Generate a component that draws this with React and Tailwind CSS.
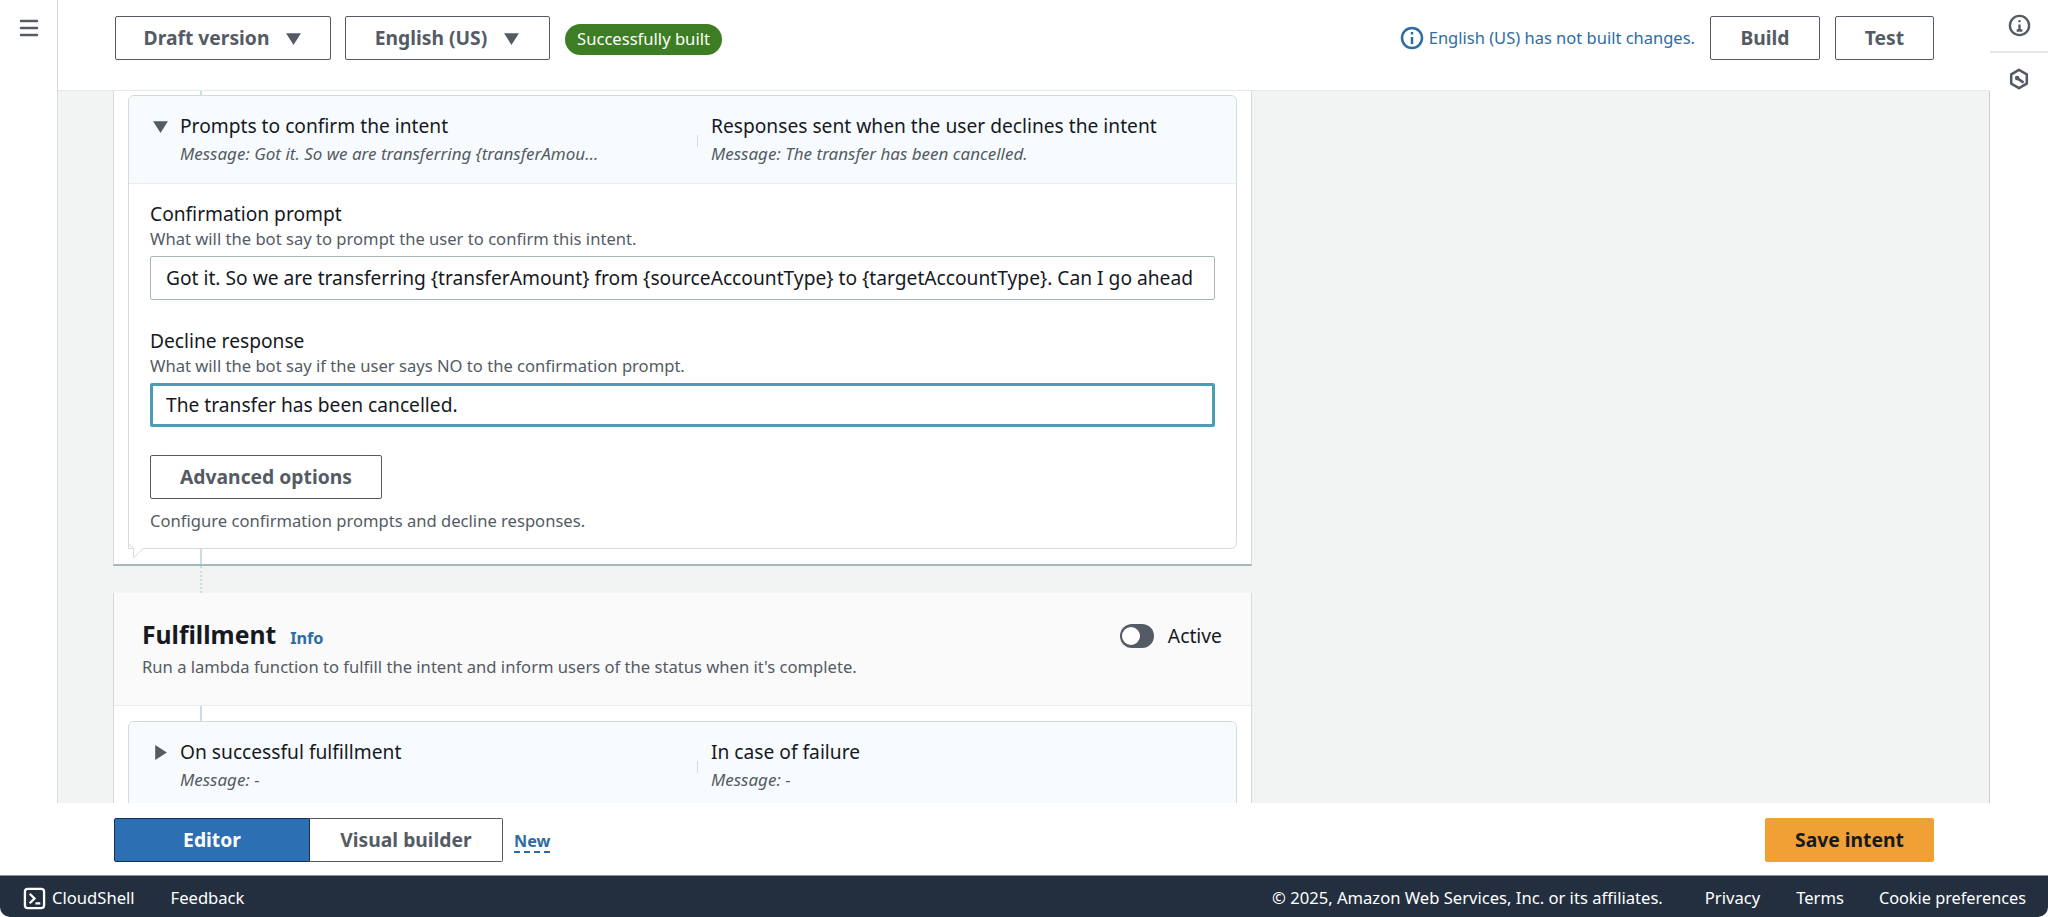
import { Menu } from "lucide-react";

const Caret = ({ dir = "down", className = "" }) => (
	<svg viewBox="0 0 16 16" className={className} fill="currentColor">
		{dir === "down" ? <path d="M1 3h14L8 14z" /> : <path d="M3 1v14l11-7z" />}
	</svg>
);

const OutlineButton = ({ children, className = "" }) => (
	<button className={`h-[44px] flex items-center justify-center bg-white border border-[#545b64] rounded-[2px] text-[19.3px] font-bold text-[#545b64] ${className}`}>
		{children}
	</button>
);

const SummaryHeader = ({ open, left, leftMsg, right, rightMsg, className = "" }) => (
	<div className={`flex bg-[#f7fbfe] ${className}`}>
		<div className="w-[568px] pl-[23px] flex shrink-0">
			<Caret dir={open ? "down" : "right"} className="w-[17px] h-[17px] text-[#545b64] mt-[22px] mr-[11px]" />
			<div className="pt-[17px]">
				<div className="text-[19.2px] leading-[26px] text-[#16191f]">{left}</div>
				<div className="text-[17px] leading-[22px] mt-[4px] italic text-[#545b64] whitespace-nowrap">{leftMsg}</div>
			</div>
		</div>
		<div className="w-px h-[12px] bg-[#d5dbdb] mt-[39px] mr-[13px]" />
		<div className="pt-[17px]">
			<div className="text-[19.2px] leading-[26px] text-[#16191f]">{right}</div>
			<div className="text-[17px] leading-[22px] mt-[4px] italic text-[#545b64] whitespace-nowrap">{rightMsg}</div>
		</div>
	</div>
);

const Field = ({ label, hint, value, focused }) => (
	<div>
		<div className="text-[19.2px] leading-[26px] text-[#16191f]">{label}</div>
		<div className="text-[16.6px] leading-[22px] text-[#545b64] mt-[1px]">{hint}</div>
		<div
			className={`mt-[6px] h-[44px] flex items-center bg-white rounded-[2px] text-[19.2px] text-[#16191f] whitespace-nowrap overflow-hidden ${
				focused ? "border-[3px] border-[#4d9cb5] px-[13px]" : "border border-[#aab7b8] px-[15px]"
			}`}
		>
			{value}
		</div>
	</div>
);

export default function App() {
	return (
		<div className="h-[917px] w-[2048px] flex flex-col bg-white overflow-hidden font-['Noto_Sans',sans-serif]">
			<div className="flex-1 flex min-h-0">
				{/* left nav */}
				<div className="w-[58px] shrink-0 border-r border-[#d5dbdb] pt-[16px] pl-[17px]">
					<Menu className="w-[24px] h-[24px] text-[#545b64]" strokeWidth={2.5} />
				</div>

				{/* center */}
				<div className="w-[1932px] shrink-0 flex flex-col">
					<div className="h-[91px] shrink-0 flex items-start pt-[16px] pl-[57px] pr-[56px] border-b border-[#e4e8e8]">
						<OutlineButton className="w-[216px] gap-[16px]">
							Draft version <Caret className="w-[17px] h-[17px]" />
						</OutlineButton>
						<OutlineButton className="w-[205px] gap-[16px] ml-[14px]">
							English (US) <Caret className="w-[17px] h-[17px]" />
						</OutlineButton>
						<div className="ml-[15px] mt-[8px] h-[31px] w-[157px] flex items-center justify-center rounded-full bg-[#3d7d23] text-white text-[16.6px]">
							Successfully built
						</div>
						<div className="ml-auto mt-[10px] flex items-center text-[16.5px] text-[#2d6da3]">
							<svg viewBox="0 0 24 24" className="w-[24px] h-[24px] mr-[5px]" fill="none" stroke="currentColor" strokeWidth="2.5">
								<circle cx="12" cy="12" r="10" />
								<path d="M12 11v7M12 6v2.5" />
							</svg>
							English (US) has not built changes.
						</div>
						<OutlineButton className="w-[110px] ml-[15px]">Build</OutlineButton>
						<OutlineButton className="w-[99px] ml-[15px]">Test</OutlineButton>
					</div>

					<div className="flex-1 min-h-0 overflow-hidden bg-[#f2f3f3] border-r border-[#c9cfcf] pl-[55px]">
						{/* confirmation card */}
						<div className="w-[1139px] bg-white border-x border-b-2 border-x-[#d5dbdb] border-b-[#aab7b8]">
							<div className="ml-[86px] w-[2px] h-[4px] bg-[#c5dfe6]" />
							<div className="relative ml-[14px] mr-[14px] border border-[#d5dbdb] rounded-[6px] rounded-bl-none h-[454px] bg-white">
								<SummaryHeader
									open
									className="h-[88px] border-b border-[#eaeded] rounded-t-[6px]"
									left="Prompts to confirm the intent"
									leftMsg="Message: Got it. So we are transferring {transferAmou…"
									right="Responses sent when the user declines the intent"
									rightMsg="Message: The transfer has been cancelled."
								/>
								<div className="pl-[21px] pr-[21px] pt-[17px]">
									<Field
										label="Confirmation prompt"
										hint="What will the bot say to prompt the user to confirm this intent."
										value="Got it. So we are transferring {transferAmount} from {sourceAccountType} to {targetAccountType}. Can I go ahead"
									/>
									<div className="h-[28px]" />
									<Field
										label="Decline response"
										hint="What will the bot say if the user says NO to the confirmation prompt."
										value="The transfer has been cancelled."
										focused
									/>
									<OutlineButton className="w-[232px] mt-[28px]">Advanced options</OutlineButton>
									<div className="text-[16.6px] leading-[22px] text-[#545b64] mt-[11px]">
										Configure confirmation prompts and decline responses.
									</div>
								</div>
								{/* speech tail */}
								<svg viewBox="0 0 16 16" className="absolute left-[-1px] bottom-[-11px] w-[16px] h-[16px]" fill="#fff" stroke="#d5dbdb">
									<path d="M0.5 0v1l5 4v10L15 5.5" />
								</svg>
							</div>
							<div className="ml-[86px] w-[2px] h-[15px] bg-[#c5dfe6]" />
						</div>
						<div className="ml-[87px] h-[27px] border-l-2 border-dotted border-[#c5dfe6]" />

						{/* fulfillment card */}
						<div className="w-[1139px] bg-white border-x border-x-[#d5dbdb]">
							<div className="h-[113px] bg-[#fafafa] border-b border-[#eaeded] px-[28px] flex items-start justify-between">
								<div className="pt-[24px]">
									<div className="flex items-baseline">
										<span className="text-[24.7px] leading-[36px] font-bold text-[#16191f]">Fulfillment</span>
										<span className="ml-[14px] text-[16.3px] font-bold text-[#2d6da3]">Info</span>
									</div>
									<div className="text-[16.6px] leading-[24px] mt-[2px] text-[#545b64]">
										Run a lambda function to fulfill the intent and inform users of the status when it's complete.
									</div>
								</div>
								<div className="flex items-center pt-[29px] pr-[1px]">
									<div className="w-[34px] h-[24px] rounded-full bg-[#545b64] flex items-center px-[2px]">
										<div className="w-[18px] h-[18px] rounded-full bg-white" />
									</div>
									<span className="ml-[14px] text-[19.3px] text-[#16191f]">Active</span>
								</div>
							</div>
							<div className="ml-[86px] w-[2px] h-[15px] bg-[#c5dfe6]" />
							<div className="ml-[14px] mr-[14px] border border-[#d5dbdb] rounded-[6px] bg-white">
								<SummaryHeader
									className="h-[120px] rounded-t-[6px]"
									left="On successful fulfillment"
									leftMsg="Message: -"
									right="In case of failure"
									rightMsg="Message: -"
								/>
							</div>
						</div>
					</div>
				</div>

				{/* right rail */}
				<div className="w-[58px] shrink-0">
					<div className="h-[53px] border-b-2 border-[#e4e8e8] flex justify-center pt-[14px]">
						<svg viewBox="0 0 24 24" className="w-[23px] h-[23px] text-[#545b64]" fill="none" stroke="currentColor" strokeWidth="2.5">
							<circle cx="12" cy="12" r="10" />
							<path d="M12 11v6M9 17.2h6M12 6.5v2.2" />
						</svg>
					</div>
					<div className="flex justify-center pt-[15px]">
						<svg viewBox="0 0 24 24" className="w-[22px] h-[22px] text-[#545b64]" fill="none" stroke="currentColor" strokeWidth="2.8" strokeLinejoin="round">
							<path d="M12 2l8.5 5v10L12 22l-8.5-5V7z" />
							<circle cx="10" cy="11" r="2.5" fill="currentColor" stroke="none" />
							<path d="M10 11l7 5" />
						</svg>
					</div>
				</div>
			</div>

			{/* bottom action bar */}
			<div className="h-[72px] shrink-0 flex items-start pt-[15px] pl-[114px] pr-[114px]">
				<button className="w-[196px] h-[44px] bg-[#2d6fb3] border border-[#16304f] rounded-l-[2px] text-white text-[19.3px] font-bold">
					Editor
				</button>
				<button className="w-[193px] h-[44px] bg-white border border-l-0 border-[#545b64] rounded-r-[2px] text-[#545b64] text-[19.3px] font-bold">
					Visual builder
				</button>
				<span className="ml-[11px] mt-[12px] h-[23px] text-[16.2px] leading-[22px] font-bold text-[#2d6da3] border-b-2 border-dashed border-[#2d6da3]">
					New
				</span>
				<button className="ml-auto w-[169px] h-[44px] bg-[#f0a035] rounded-[2px] text-[#16191f] text-[19.3px] font-bold">
					Save intent
				</button>
			</div>

			{/* footer */}
			<div className="h-[42px] shrink-0 bg-[#232f3e] border-t border-[#8a939c] rounded-b-[10px] flex items-center text-white text-[16.6px] pt-[3px] pl-[23px] pr-[22px]">
				<svg viewBox="0 0 24 24" className="w-[23px] h-[23px] mr-[6px]" fill="none" stroke="currentColor" strokeWidth="2.4">
					<rect x="2" y="2" width="20" height="20" rx="3" />
					<path d="M7 7l5 5-5 5M13 17h5" />
				</svg>
				<span>CloudShell</span>
				<span className="ml-[36px]">Feedback</span>
				<span className="ml-auto">© 2025, Amazon Web Services, Inc. or its affiliates.</span>
				<span className="ml-[42px]">Privacy</span>
				<span className="ml-[36px]">Terms</span>
				<span className="ml-[35px] text-[16.3px]">Cookie preferences</span>
			</div>
		</div>
	);
}
